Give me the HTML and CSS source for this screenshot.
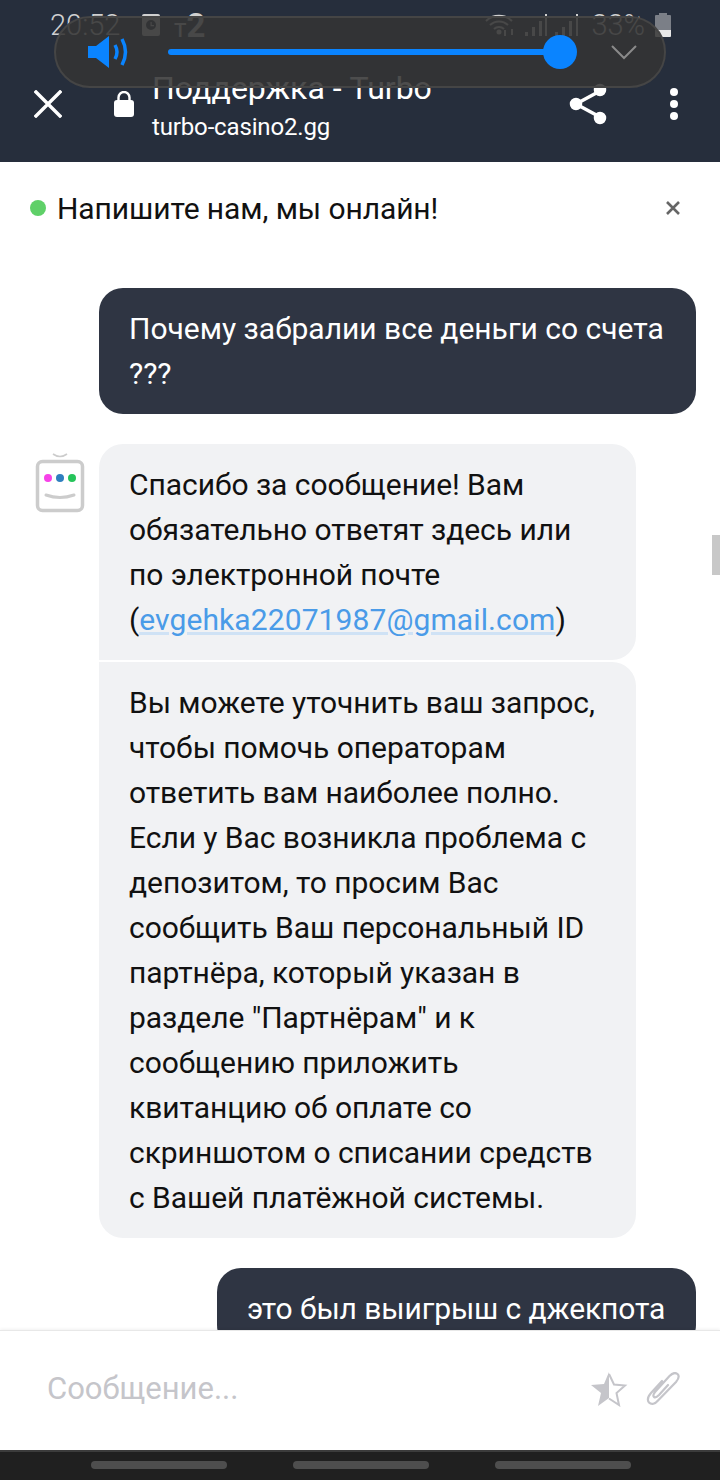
FILE: index.html
```html
<!DOCTYPE html>
<html lang="ru">
<head>
  <meta charset="utf-8" />
  <meta name="viewport" content="width=device-width, initial-scale=1" />
  <title>Поддержка - Turbo</title>
  <link rel="stylesheet" href="styles.css">
</head>
<body>
<div class="screen">
  <header class="appbar">
    <div class="status">
      <span class="status-time">20:52</span>
      <svg class="status-cal" width="18" height="22" viewBox="0 0 18 22"><path fill="#d0d0d0" fill-rule="evenodd" d="M2 0h14a2 2 0 0 1 2 2v18a2 2 0 0 1-2 2H2a2 2 0 0 1-2-2V2a2 2 0 0 1 2-2zM9 6a5 5 0 1 0 0 10A5 5 0 0 0 9 6zM8.500 8h1.200v3h2.300v1.200H8.500z"/></svg>
      <span class="status-op">т<b>2</b></span>
      <span class="status-fill"></span>
      <svg class="status-wifi" width="32" height="24" viewBox="0 0 32 24" fill="none" stroke="#d0d0d0" stroke-width="2"><path d="M1 8a19 19 0 0 1 26 0M5 12a13 13 0 0 1 18 0M9 16a7 7 0 0 1 10 0"/><circle cx="14" cy="19" r="1.500" fill="#d0d0d0"/><path d="M20 17v6M27 22v-6"/></svg>
      <svg class="status-signal" width="54" height="24" viewBox="0 0 54 24" fill="#d0d0d0"><rect x="0" y="19" width="3" height="4"/><rect x="7" y="14" width="3" height="9"/><rect x="14" y="8" width="3" height="15"/><rect x="20" y="1" width="2" height="22"/><rect x="30" y="19" width="3" height="4"/><rect x="37" y="14" width="3" height="9"/><rect x="44" y="8" width="3" height="15"/><rect x="51" y="1" width="2" height="22"/></svg>
      <span class="status-pct">33%</span>
      <svg class="status-batt" width="16" height="24" viewBox="0 0 16 24"><path fill="#7b7f87" d="M4 0h8v2h3a1 1 0 0 1 1 1v14H0V3a1 1 0 0 1 1-1h3z"/><path fill="#e8e8e8" d="M0 17h16v6a1 1 0 0 1-1 1H1a1 1 0 0 1-1-1z"/></svg>
    </div>
    <div class="toolbar">
      <svg class="tool-close" width="28" height="28" viewBox="0 0 28 28" stroke="#fff" stroke-width="3.400" stroke-linecap="square"><path d="M2 2l24 24M26 2L2 26"/></svg>
      <svg class="tool-lock" width="20" height="26" viewBox="0 0 20 26"><path fill="none" stroke="#fff" stroke-width="2.400" d="M4.500 11V6.500a5.500 5.500 0 0 1 11 0V11"/><rect y="9" width="20" height="17" rx="3" fill="#fff"/></svg>
      <div class="tool-title">
        <div class="tool-name">Поддержка - Turbo</div>
        <div class="tool-url">turbo-casino2.gg</div>
      </div>
      <svg class="tool-share" width="40" height="42" viewBox="0 0 40 42" fill="#fff" stroke="#fff" stroke-width="3.500"><path d="M32 8L8 21l24 13" fill="none"/><circle cx="8" cy="21" r="4.500"/><circle cx="32" cy="7" r="4.500"/><circle cx="32" cy="35" r="4.500"/></svg>
      <div class="tool-more"><i></i><i></i><i></i></div>
    </div>
  </header>

  <main class="chat">
    <div class="chat-head">
      <span class="chat-dot"></span>
      <span class="chat-online">Напишите нам, мы онлайн!</span>
      <svg class="chat-close" width="14" height="14" viewBox="0 0 14 14" stroke="#666" stroke-width="2.600"><path d="M1 1l12 12M13 1L1 13"/></svg>
    </div>
    <div class="msgs">
      <div class="msg msg--me msg--wide">Почему забралии все деньги со счета ???</div>
      <div class="bot">
        <svg class="bot-ava" width="50" height="60" viewBox="0 0 50 60" fill="none">
          <path d="M18 1q7 5 14 0" stroke="#ccc" stroke-width="1.600"/>
          <rect x="2.500" y="8.500" width="45" height="49" rx="5" stroke="#ccc" stroke-width="3.500"/>
          <circle cx="13" cy="25" r="4" fill="#f742e8"/>
          <circle cx="25" cy="25" r="4" fill="#2f7fbf"/>
          <circle cx="37" cy="25" r="4" fill="#25c45a"/>
          <path d="M11 42q14 5 28 0" stroke="#ccc" stroke-width="3" stroke-linecap="round"/>
        </svg>
        <div class="bot-msgs">
          <div class="msg msg--bot msg--first">Спасибо за сообщение! Вам обязательно ответят здесь или по электронной почте (<a class="msg-link" href="#">evgehka22071987@gmail.com</a>)</div>
          <div class="msg msg--bot msg--last">Вы можете уточнить ваш запрос, чтобы помочь операторам ответить вам наиболее полно. Если у Вас возникла проблема с депозитом, то просим Вас сообщить Ваш персональный ID партнёра, который указан в разделе "Партнёрам" и к сообщению приложить квитанцию об оплате со скриншотом о списании средств с Вашей платёжной системы.</div>
        </div>
      </div>
      <div class="msg msg--me msg--short">это был выигрыш с джекпота</div>
    </div>
    <span class="scroll-thumb"></span>
  </main>

  <footer class="composer">
    <span class="composer-ph">Сообщение...</span>
    <svg class="composer-star" width="38" height="36" viewBox="0 0 38 36"><path fill="#c5c5ca" d="M19 1v26L8 35l3-13L1 14l13-1z"/><path fill="none" stroke="#c5c5ca" stroke-width="2" d="M19 3l5 10.500 11 1-8.500 7.500 2.500 12L19 27.500"/></svg>
    <svg class="composer-clip" width="36" height="34" viewBox="0 0 36 34" fill="none" stroke="#c5c5ca" stroke-width="2.200" stroke-linecap="round"><path d="M17 9L6 21c-3 3.500-4 7-2 9.500 2.500 2.500 6 1.500 9-2L31 10c3-3.500 3.500-6 1.500-8-2.500-2-5-1-8 2L10 20c-2 2.500-2 4-1 5 1.500 1 3 0 5-2l9-10"/></svg>
  </footer>

  <nav class="navbar"><i></i><i></i><i></i></nav>

  <div class="volume">
    <svg class="volume-icon" width="40" height="32" viewBox="0 0 40 32" fill="none"><path fill="#0a84ff" d="M0 10h8L21 0v32L8 22H0z"/><path stroke="#0a84ff" stroke-width="3.500" d="M27 9q4 7 0 14M34 3q7 13 0 26"/></svg>
    <div class="volume-track"><span class="volume-thumb"></span></div>
    <svg class="volume-chev" width="26" height="15" viewBox="0 0 26 15" fill="none" stroke="#8a8a8a" stroke-width="2"><path d="M1 1l12 12L25 1"/></svg>
  </div>
</div>
</body>
</html>
```

FILE: styles.css
```css
html, body {
  margin: 0;
  padding: 0;
}
body {
  background: #fff;
  font-family: Roboto, "Noto Sans", sans-serif;
}
.screen {
  position: relative;
  width: 720px;
  height: 1480px;
  display: flex;
  flex-direction: column;
  overflow: hidden;
}

/* top bar */
.appbar {
  height: 162px;
  flex: none;
  background: #262e3c;
  color: #fff;
  box-sizing: border-box;
}
.status {
  height: 48px;
  box-sizing: border-box;
  padding: 2px 49px 0 50px;
  display: flex;
  align-items: center;
  color: #d0d0d0;
}
.status-time {
  font-size: 29px;
  font-weight: 300;
  width: 92px;
}
.status-op {
  font-size: 26px;
  margin-left: 14px;
}
.status-op b {
  font-size: 33px;
  font-weight: 700;
  letter-spacing: -1px;
}
.status-fill {
  flex: 1;
}
.status-signal {
  margin-left: 8px;
}
.status-pct {
  font-size: 29px;
  font-weight: 300;
  margin-left: 12px;
}
.status-batt {
  margin-left: 10px;
}
.toolbar {
  display: flex;
  align-items: center;
  height: 112px;
  padding: 0 0 0 34px;
  position: relative;
}
.tool-lock {
  margin-left: 52px;
}
.tool-title {
  margin-left: 18px;
  flex: 1;
  padding-top: 3px;
}
.tool-name {
  font-size: 32px;
  line-height: 38px;
}
.tool-url {
  font-size: 24px;
  letter-spacing: -0.15px;
  line-height: 30px;
  margin-top: 5px;
}
.tool-share {
  margin-right: 62px;
}
.tool-more {
  display: flex;
  flex-direction: column;
  gap: 4px;
  margin-right: 42px;
}
.tool-more i {
  display: block;
  width: 8px;
  height: 8px;
  border-radius: 50%;
  background: #fff;
}

/* chat */
.chat {
  position: relative;
  flex: 1;
  min-height: 0;
  overflow: hidden;
  background: #fff;
  color: #111;
}
.chat-head {
  height: 92px;
  display: flex;
  align-items: center;
  padding: 0 40px 0 30px;
  margin-bottom: 34px;
}
.chat-dot {
  width: 16px;
  height: 16px;
  border-radius: 50%;
  background: #5fd068;
}
.chat-online {
  flex: 1;
  margin-left: 11px;
  font-size: 30px;
  letter-spacing: -0.08px;
}
.msgs {
  display: flex;
  flex-direction: column;
  gap: 30px;
  padding: 0 24px 0 36px;
}
.msg {
  box-sizing: border-box;
  padding: 18px 30px;
  font-size: 30px;
  line-height: 45px;
  border-radius: 24px;
}
.msg--me {
  align-self: flex-end;
  background: #2f3543;
  color: #fff;
}
.msg--wide {
  width: 597px;
}
.msg--short {
  width: 479px;
  letter-spacing: -0.1px;
}
.bot {
  display: flex;
  align-items: flex-start;
}
.bot-ava {
  flex: none;
  margin: 9px 14px 0 -1px;
}
.bot-msgs {
  display: flex;
  flex-direction: column;
  gap: 2px;
  width: 537px;
}
.msg--bot {
  background: #f1f2f4;
  letter-spacing: -0.05px;
}
.msg--first {
  border-bottom-left-radius: 0;
}
.msg--last {
  border-top-left-radius: 0;
}
.msg-link {
  color: #4a9be8;
  letter-spacing: 0.1px;
  text-decoration: underline 3px #cfe2f5;
  text-underline-offset: 2px;
}
.scroll-thumb {
  position: absolute;
  right: 0;
  top: 373px;
  width: 8px;
  height: 40px;
  background: #c8c8c8;
}

/* composer */
.composer {
  flex: none;
  position: relative;
  height: 120px;
  box-sizing: border-box;
  background: #fff;
  border-top: 1px solid #e8e8e8;
  box-shadow: 0 -1px 3px rgba(0, 0, 0, 0.06);
  display: flex;
  align-items: center;
  padding: 0 39px 4px 47px;
}
.composer-ph {
  flex: 1;
  font-size: 31px;
  color: #c5c5ca;
}
.composer-clip {
  margin-left: 17px;
}

.navbar {
  flex: none;
  height: 30px;
  box-sizing: border-box;
  background: #202020;
  border-top: 2px solid #3c3c3c;
  display: flex;
  gap: 66px;
  padding: 9px 0 0 91px;
}
.navbar i {
  display: block;
  width: 136px;
  height: 8px;
  border-radius: 4px;
  background: #4e4e4e;
}

/* volume popup over the top bar */
.volume {
  position: absolute;
  left: 54px;
  top: 16px;
  width: 612px;
  height: 72px;
  box-sizing: border-box;
  border: 2px solid #454545;
  border-radius: 36px;
  background: rgba(52, 52, 52, 0.88);
  display: flex;
  align-items: center;
  padding: 0 27px 0 32px;
}
.volume-track {
  position: relative;
  width: 392px;
  height: 6px;
  margin-left: 40px;
  border-radius: 3px;
  background: #0a84ff;
}
.volume-thumb {
  position: absolute;
  right: -17px;
  top: -14px;
  width: 34px;
  height: 34px;
  border-radius: 50%;
  background: #0a84ff;
}
.volume-chev {
  margin-left: 51px;
}
```
